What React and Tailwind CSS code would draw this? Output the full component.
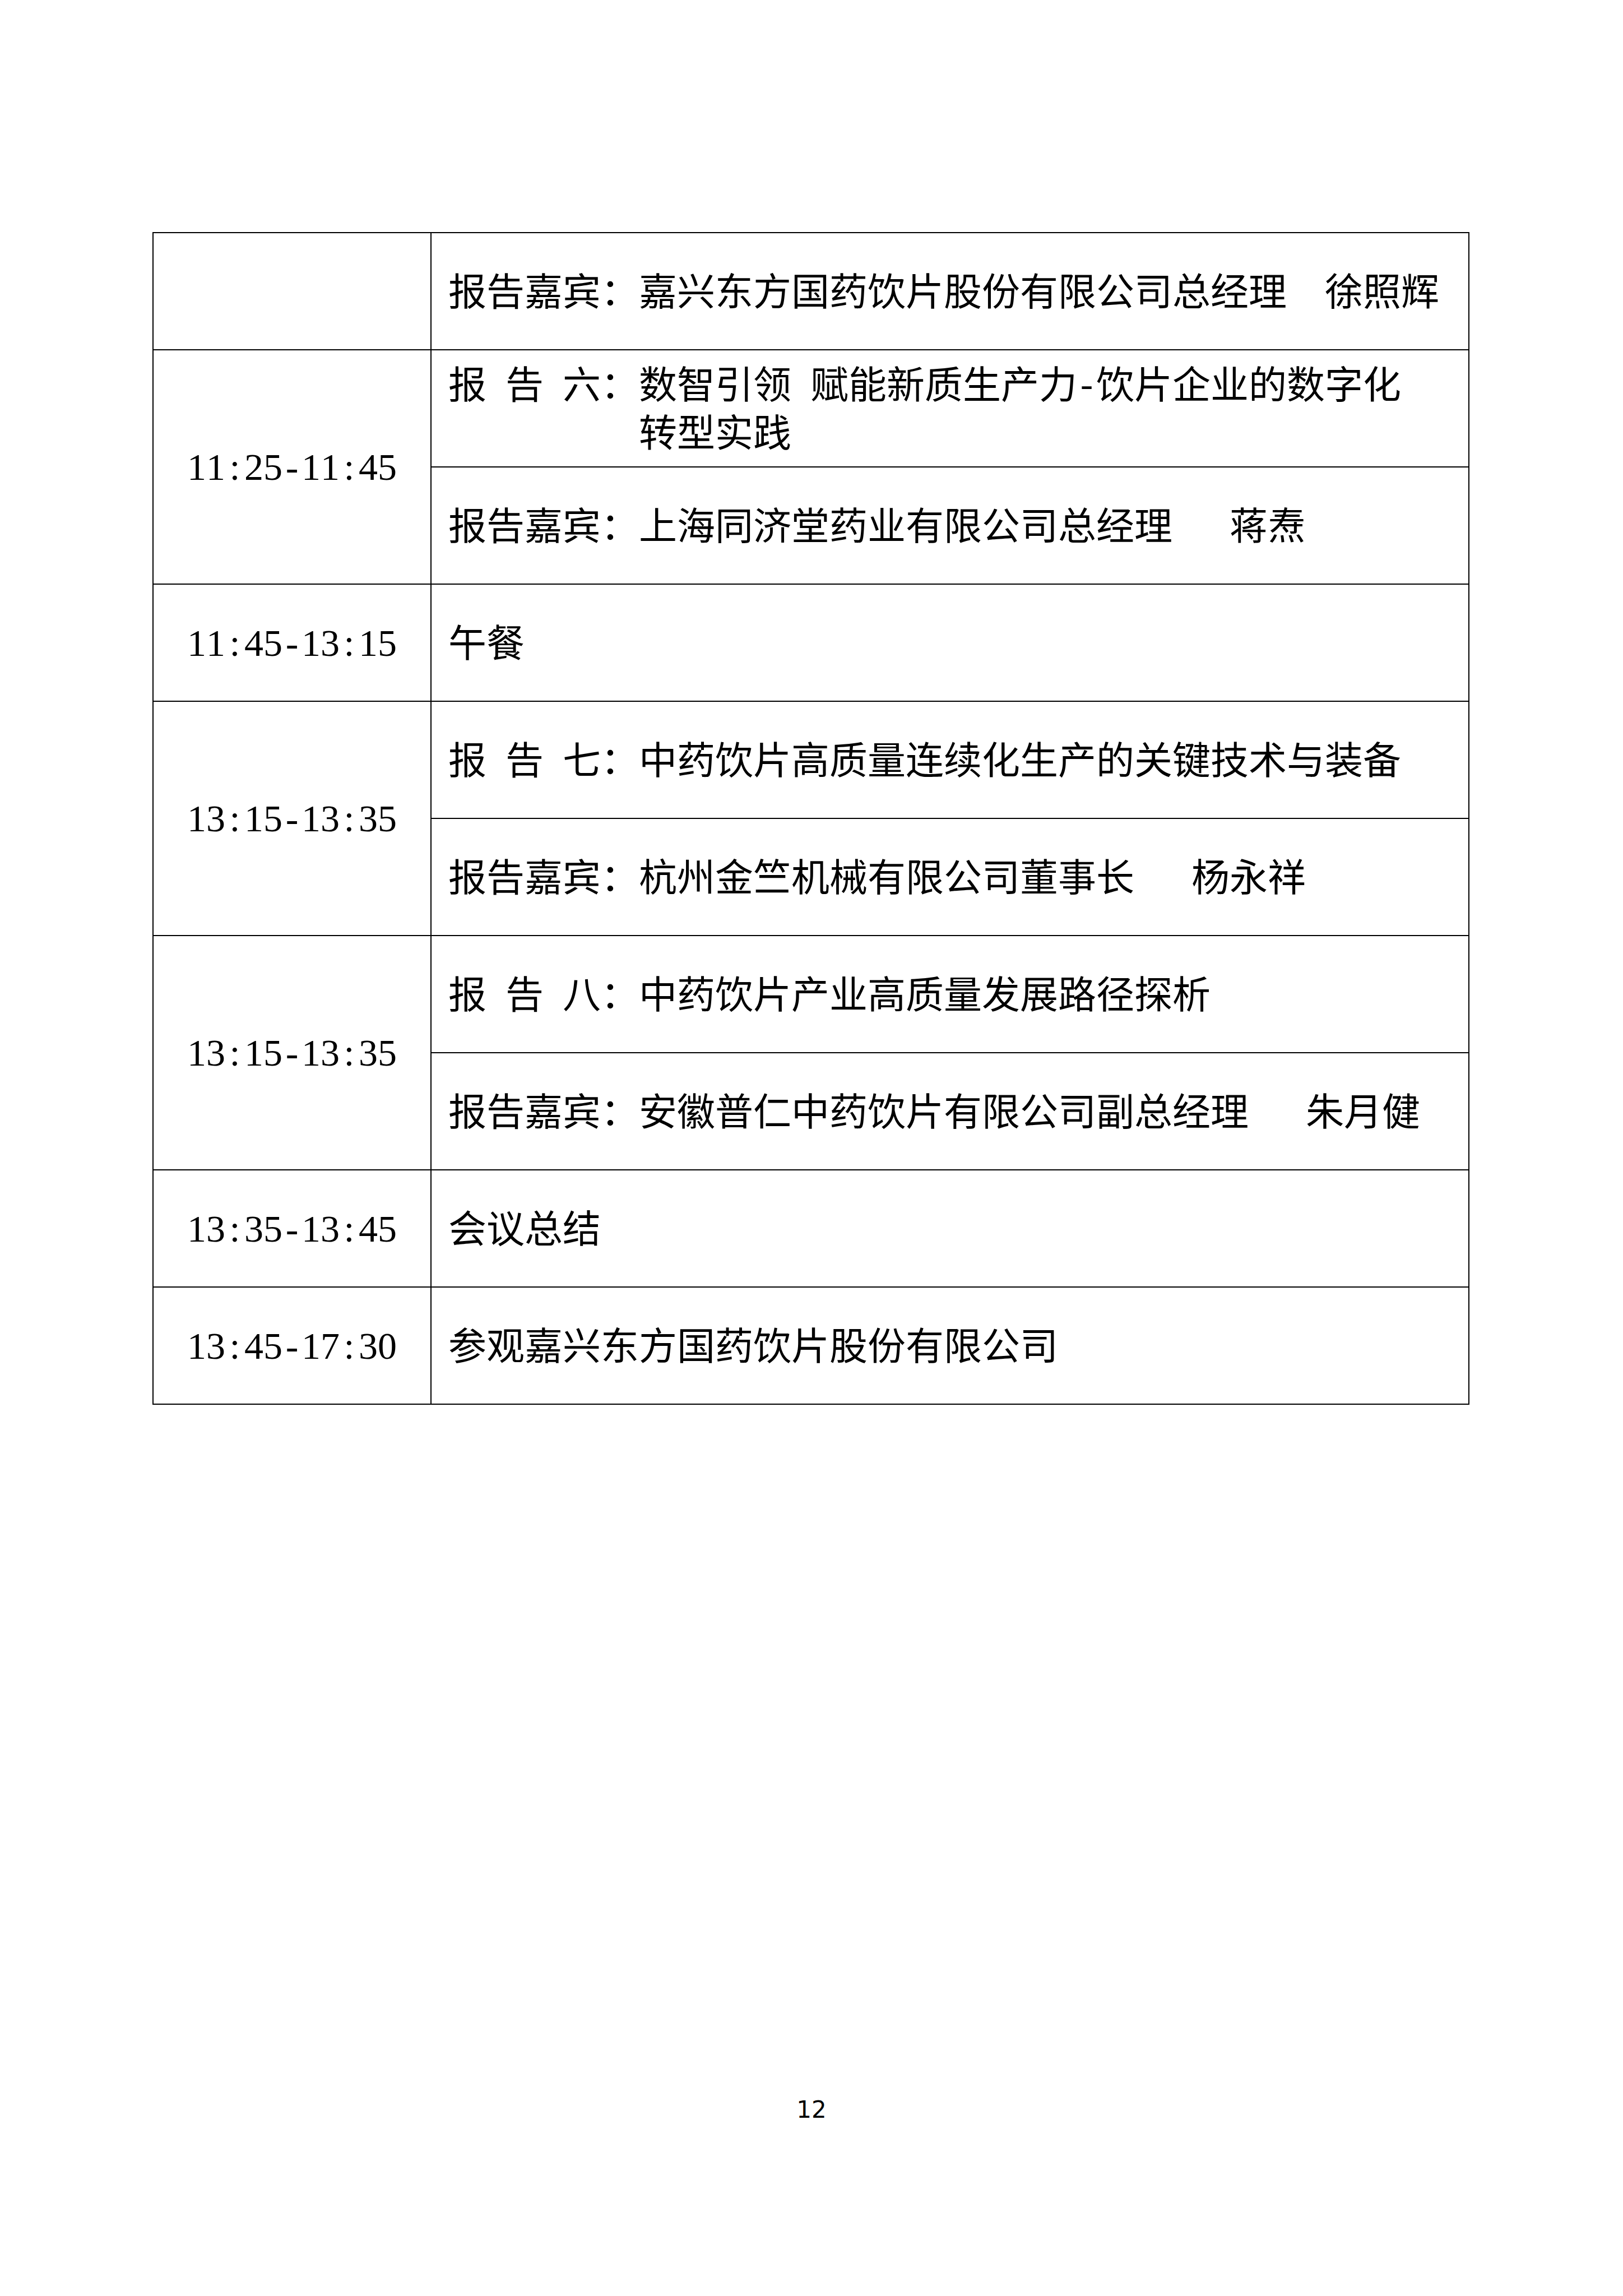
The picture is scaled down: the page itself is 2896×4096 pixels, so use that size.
import React from "react";

function T({ s }) {
  const out = [];
  let buf = "";
  [...s].forEach((c, i) => {
    if (c.charCodeAt(0) < 128) {
      if (buf) {
        out.push(buf);
        buf = "";
      }
      out.push(
        <span key={i} className="inline-block w-[0.5em] text-center">
          {c === " " ? "\u00a0" : c}
        </span>
      );
    } else {
      buf += c;
    }
  });
  if (buf) out.push(buf);
  return <>{out}</>;
}

const leftBase =
  "border-r-2 border-b-2 border-black flex items-center justify-center font-['Liberation_Serif',serif] whitespace-nowrap";
const rightBase =
  "border-r-2 border-b-2 border-black flex flex-col justify-center pl-[30px] pb-[8px] leading-[86px] whitespace-nowrap";

function Left({ t, span }) {
  return (
    <div className={span ? leftBase + " row-span-2" : leftBase}>
      <div>
        <T s={t} />
      </div>
    </div>
  );
}

function Right({ children }) {
  return <div className={rightBase}>{children}</div>;
}

export default function App() {
  return (
    <div className="w-[2896px] h-[4096px] bg-white text-black overflow-hidden flex flex-col font-['Noto_Sans_CJK_SC',sans-serif] text-[68px]">
      <div className="ml-[272px] mt-[414px] w-[2350px] border-t-2 border-l-2 border-black grid grid-cols-[496px_1852px] auto-rows-[209px]">
        <Left t="" />
        <Right>
          <div>
            <T s="报告嘉宾：嘉兴东方国药饮片股份有限公司总经理  徐照辉" />
          </div>
        </Right>

        <Left t="11:25-11:45" span />
        <Right>
          <div>
            <T s="报 告 六：数智引领 赋能新质生产力-饮片企业的数字化" />
          </div>
          <div className="pl-[5em]">转型实践</div>
        </Right>
        <Right>
          <div>
            <T s="报告嘉宾：上海同济堂药业有限公司总经理   蒋焘" />
          </div>
        </Right>

        <Left t="11:45-13:15" />
        <Right>
          <div>午餐</div>
        </Right>

        <Left t="13:15-13:35" span />
        <Right>
          <div>
            <T s="报 告 七：中药饮片高质量连续化生产的关键技术与装备" />
          </div>
        </Right>
        <Right>
          <div>
            <T s="报告嘉宾：杭州金竺机械有限公司董事长   杨永祥" />
          </div>
        </Right>

        <Left t="13:15-13:35" span />
        <Right>
          <div>
            <T s="报 告 八：中药饮片产业高质量发展路径探析" />
          </div>
        </Right>
        <Right>
          <div>
            <T s="报告嘉宾：安徽普仁中药饮片有限公司副总经理   朱月健" />
          </div>
        </Right>

        <Left t="13:35-13:45" />
        <Right>
          <div>会议总结</div>
        </Right>

        <Left t="13:45-17:30" />
        <Right>
          <div>参观嘉兴东方国药饮片股份有限公司</div>
        </Right>
      </div>

      <div className="mt-[1237px] w-full text-center font-['DejaVu_Sans',sans-serif] text-[42px] leading-[42px]">
        12
      </div>
    </div>
  );
}
